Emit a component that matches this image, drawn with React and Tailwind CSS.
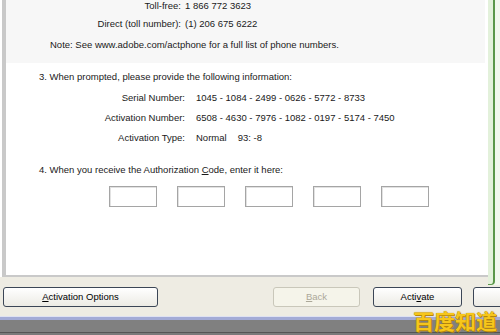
import React from 'react';

const Btn = ({ children, className = '', disabled = false }) => (
    <div
        className={`h-[20px] shrink-0 rounded-[3px] border flex items-center justify-center ${
            disabled
                ? 'border-[#c9c7ba] bg-[#f5f4ea] text-[#aca899]'
                : 'border-[#3b4656] bg-gradient-to-b from-white to-[#ecebe4] text-black'
        } ${className}`}
    >
        {children}
    </div>
);

const Row = ({ label, labelW, gap, children, className = '' }) => (
    <div className={`flex leading-[12px] ${className}`}>
        <div className="text-right shrink-0" style={{ width: labelW }}>{label}</div>
        <div style={{ marginLeft: gap }}>{children}</div>
    </div>
);

const App = () => {
    return (
        <div
            className="relative w-[500px] h-[335px] overflow-hidden bg-[#eeece3] flex flex-col text-[9.5px] text-[#1a1a1a]"
            style={{ fontFamily: '"Liberation Sans", Arial, sans-serif' }}
        >
            <div className="flex h-[285px] shrink-0">
                <div className="flex-1 flex flex-col">
                    <div className="h-[277px] pl-[2px] bg-white flex">
                        <div className="flex-1 border-l-[4px] border-b-[2px] border-[#c9c9c9] flex flex-col">
                            {/* phone section */}
                            <div className="h-[63px] bg-[#f7f7f7] mr-[3px] flex flex-col">
                                <Row label="Toll-free:" labelW={175} gap={4} className="mt-0">1 866 772 3623</Row>
                                <Row label="Direct (toll number):" labelW={175} gap={4} className="mt-[6px]">(1) 206 675 6222</Row>
                                <div className="leading-[12px] mt-[9px] pl-[44px]">
                                    Note: See www.adobe.com/actphone for a full list of phone numbers.
                                </div>
                            </div>

                            <div className="flex flex-col">
                                <div className="leading-[12px] mt-[8px] pl-[33px]">
                                    3. When prompted, please provide the following information:
                                </div>
                                <Row label="Serial Number:" labelW={179} gap={11} className="mt-[9px]">
                                    1045 - 1084 - 2499 - 0626 - 5772 - 8733
                                </Row>
                                <Row label="Activation Number:" labelW={179} gap={11} className="mt-[8px]">
                                    6508 - 4630 - 7976 - 1082 - 0197 - 5174 - 7450
                                </Row>
                                <Row label="Activation Type:" labelW={179} gap={11} className="mt-[8px]">
                                    <span>Normal</span>
                                    <span className="ml-[11px]">93: -8</span>
                                </Row>
                                <div className="leading-[12px] mt-[20px] pl-[33px]">
                                    4. When you receive the Authorization <span className="underline">C</span>ode, enter it here:
                                </div>
                                <div className="flex gap-[20px] mt-[10px] pl-[103px]">
                                    {[0, 1, 2, 3, 4].map((i) => (
                                        <div
                                            key={i}
                                            className="w-[48px] h-[21px] border border-[#a5a5a5] shadow-[inset_1px_1px_0_#e2e2e2] bg-white"
                                        />
                                    ))}
                                </div>
                            </div>
                        </div>
                    </div>
                </div>
                <div className="w-[12px] flex bg-[#f1f8ed]">
                    <div className="w-[7px] h-full bg-[#e3f1db] border-r-2 border-b border-[#5a9749] rounded-br-[4px]" />
                </div>
            </div>

            {/* buttons */}
            <div className="h-[31px] shrink-0 flex items-start pt-[2px] pl-[3px]">
                <Btn className="w-[155px]">
                    <span><span className="underline">A</span>ctivation Options</span>
                </Btn>
                <Btn disabled className="w-[87px] ml-[115px]">
                    <span><span className="underline">B</span>ack</span>
                </Btn>
                <Btn className="w-[89px] ml-[13px]">
                    <span>Acti<span className="underline">v</span>ate</span>
                </Btn>
                <Btn className="w-[89px] ml-[11px]" />
            </div>

            {/* taskbar edge */}
            <div className="h-[1px] bg-[#dfe2f2] shrink-0" />
            <div className="h-[3px] bg-[#a3abd6] shrink-0" />
            <div className="h-[12px] bg-[#808080] shrink-0" />
            <div className="h-[1px] bg-[#555555] shrink-0" />
            <div className="flex-1 bg-[#7a7a7a]" />

            <div
                className="absolute right-[3px] bottom-[4px] text-[21px] font-bold leading-none text-[#f6c61c] [text-shadow:0_0_1px_#9a6e00,1px_1px_0_#b98a10]"
                style={{ fontFamily: '"Noto Sans CJK SC", sans-serif' }}
            >
                百度知道
            </div>
        </div>
    );
};

export default App;
